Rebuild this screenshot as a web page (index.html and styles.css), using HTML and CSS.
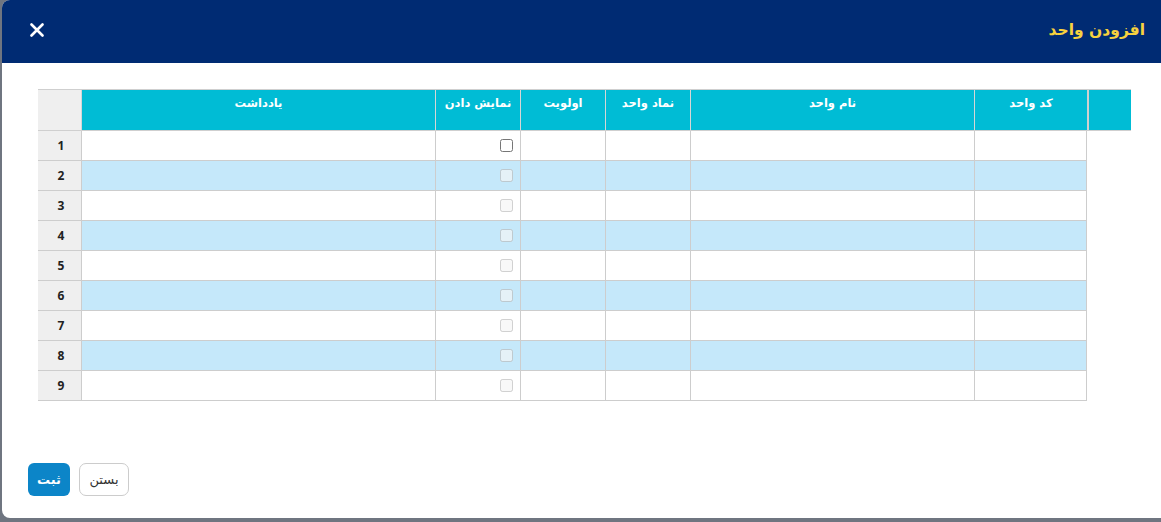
FILE: index.html
```html
<!DOCTYPE html>
<html lang="fa">
<head>
<meta charset="utf-8">
<title>افزودن واحد</title>
<link rel="stylesheet" href="styles.css">
</head>
<body>
<div class="modal">
  <header class="modal-header">
    <h1 class="modal-title">افزودن واحد</h1>
    <button class="close-btn" aria-label="close">
      <svg width="14" height="14" viewBox="0 0 14 14"><path d="M1.5 1.5 L12.5 12.5 M12.5 1.5 L1.5 12.5" stroke="#fff" stroke-width="2.6" stroke-linecap="round"/></svg>
    </button>
  </header>
  <main class="modal-body">
    <div class="grid-wrap">
      <div class="thead">
        <div class="th th-gutter"></div>
        <div class="th">کد واحد</div>
        <div class="th">نام واحد</div>
        <div class="th">نماد واحد</div>
        <div class="th">اولویت</div>
        <div class="th">نمایش دادن</div>
        <div class="th">یادداشت</div>
        <div class="th th-num"></div>
      </div>
      <div class="tbody">
        <div class="tr"><div class="td"></div><div class="td"></div><div class="td"></div><div class="td"></div><div class="td td-check"><input type="checkbox"></div><div class="td"></div><div class="td td-num">1</div></div>
        <div class="tr alt"><div class="td"></div><div class="td"></div><div class="td"></div><div class="td"></div><div class="td td-check"><input type="checkbox" disabled></div><div class="td"></div><div class="td td-num">2</div></div>
        <div class="tr"><div class="td"></div><div class="td"></div><div class="td"></div><div class="td"></div><div class="td td-check"><input type="checkbox" disabled></div><div class="td"></div><div class="td td-num">3</div></div>
        <div class="tr alt"><div class="td"></div><div class="td"></div><div class="td"></div><div class="td"></div><div class="td td-check"><input type="checkbox" disabled></div><div class="td"></div><div class="td td-num">4</div></div>
        <div class="tr"><div class="td"></div><div class="td"></div><div class="td"></div><div class="td"></div><div class="td td-check"><input type="checkbox" disabled></div><div class="td"></div><div class="td td-num">5</div></div>
        <div class="tr alt"><div class="td"></div><div class="td"></div><div class="td"></div><div class="td"></div><div class="td td-check"><input type="checkbox" disabled></div><div class="td"></div><div class="td td-num">6</div></div>
        <div class="tr"><div class="td"></div><div class="td"></div><div class="td"></div><div class="td"></div><div class="td td-check"><input type="checkbox" disabled></div><div class="td"></div><div class="td td-num">7</div></div>
        <div class="tr alt"><div class="td"></div><div class="td"></div><div class="td"></div><div class="td"></div><div class="td td-check"><input type="checkbox" disabled></div><div class="td"></div><div class="td td-num">8</div></div>
        <div class="tr"><div class="td"></div><div class="td"></div><div class="td"></div><div class="td"></div><div class="td td-check"><input type="checkbox" disabled></div><div class="td"></div><div class="td td-num">9</div></div>
      </div>
    </div>
  </main>
  <footer class="modal-footer">
    <button class="btn btn-primary">ثبت</button>
    <button class="btn btn-default">بستن</button>
  </footer>
</div>
</body>
</html>
```

FILE: styles.css
```css
html, body {
  margin: 0;
  padding: 0;
  height: 100%;
  overflow: hidden;
}
body {
  background: #6f7580;
  font-family: "Open Sans", "DejaVu Sans", sans-serif;
}
.modal {
  margin-left: 2px;
  width: 1167px;
  height: 518px;
  background: #fff;
  border-radius: 8px;
  overflow: hidden;
  display: flex;
  flex-direction: column;
}
.modal-header {
  height: 63px;
  flex: none;
  background: #002b73;
  display: flex;
  direction: rtl;
  align-items: center;
  justify-content: space-between;
  padding: 0 16px 0 28px;
  box-sizing: border-box;
  width: 1159px;
}
.modal-title {
  margin: 0;
  color: #f7d23e;
  font-family: "DejaVu Sans", sans-serif;
  font-size: 15.5px;
  font-weight: bold;
  padding-bottom: 3px;
}
.close-btn {
  background: none;
  border: 0;
  padding: 0;
  width: 14px;
  height: 14px;
  display: flex;
  margin-bottom: 4px;
}
.modal-body {
  flex: none;
  height: 337px;
  padding: 26px 0 0 36px;
  box-sizing: border-box;
}
.grid-wrap {
  display: flex;
  flex-direction: column;
  align-items: flex-start;
}
.thead {
  display: grid;
  direction: rtl;
  grid-template-columns: 44px 113px 284px 85px 85px 85px 354px 43px;
  height: 42px;
  border-top: 1px solid #cfcfcf;
  box-sizing: border-box;
}
.th {
  background: #00bcd5;
  color: #fff;
  font-family: "DejaVu Sans", sans-serif;
  font-size: 11.5px;
  font-weight: bold;
  text-align: center;
  padding-top: 6px;
  border-left: 1px solid #d6d6d6;
  border-bottom: 1px solid #cfcfcf;
  box-sizing: border-box;
}
.th-gutter {
  border-left: 2px solid #d0d0d0;
}
.th.th-num {
  background: #efefef;
  border-left: 0;
}
.tbody {
  display: flex;
  flex-direction: column;
}
.tr {
  display: grid;
  direction: rtl;
  grid-template-columns: 113px 284px 85px 85px 85px 354px 43px;
  height: 30px;
  background: #fff;
}
.tr.alt {
  background: #c5e8fa;
}
.td {
  border-left: 1px solid #cdcdcd;
  border-bottom: 1px solid #cdcdcd;
  box-sizing: border-box;
}
.tr .td:first-child {
  border-right: 1px solid #cdcdcd;
}
.td-check {
  display: flex;
  align-items: center;
  padding-right: 7px;
}
.td-check input {
  margin: 0;
  width: 13px;
  height: 13px;
}
.td.td-num {
  background: #efefef;
  border-left: 0;
  display: flex;
  align-items: center;
  justify-content: center;
  padding-left: 3px;
  font-family: "Open Sans", sans-serif;
  font-weight: bold;
  font-size: 12px;
  color: #222;
}
.modal-footer {
  flex: none;
  display: flex;
  gap: 9px;
  padding-left: 26px;
  padding-top: 63px;
}
.btn {
  height: 33px;
  border-radius: 6px;
  font-family: "DejaVu Sans", sans-serif;
  font-size: 13px;
  padding: 0;
  box-sizing: border-box;
}
.btn-primary {
  width: 42px;
  background: #0c85c8;
  border: 0;
  color: #fff;
  font-weight: bold;
}
.btn-default {
  width: 50px;
  background: #fff;
  border: 1px solid #cccccc;
  color: #333;
  border-radius: 7px;
}
```
